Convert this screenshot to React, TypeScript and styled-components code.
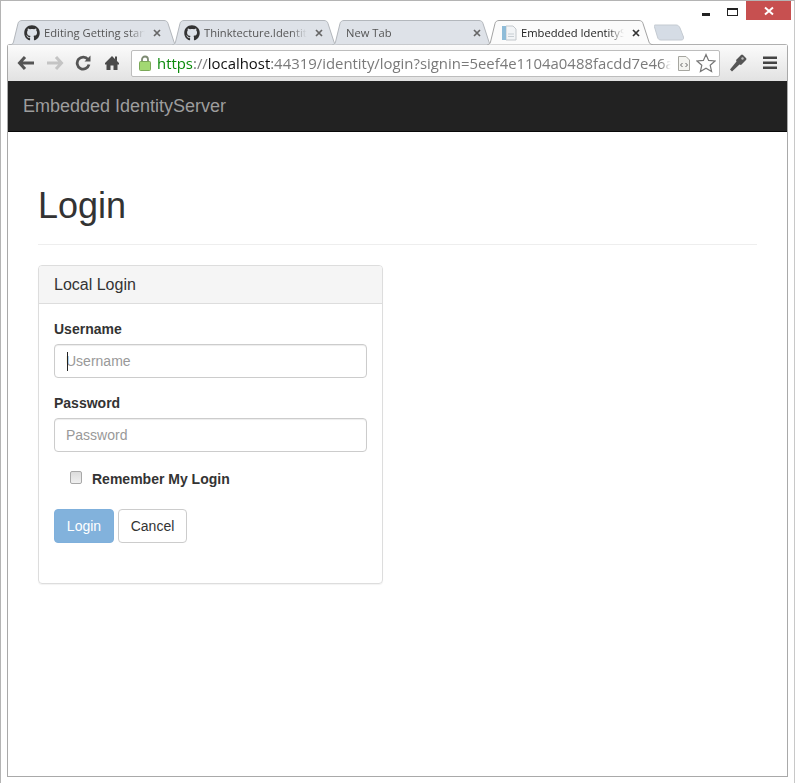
import React from "react"
import styled, { createGlobalStyle } from "styled-components"
import { FaGithub } from "react-icons/fa"

const GlobalStyle = createGlobalStyle`
   html, body {
      margin: 0;
      padding: 0;
      background: #fff;
   }
   * { box-sizing: border-box; }
`

const Win = styled.div`
   width: 795px;
   height: 783px;
   display: flex;
   flex-direction: column;
   background: #fff;
   border-top: 1px solid #b4b4b4;
   border-left: 1px solid #b4b4b4;
   border-right: 1px solid #c8c8c8;
   overflow: hidden;
`
const TitleBar = styled.div`
   height: 19px;
   flex: none;
   display: flex;
   justify-content: flex-end;
   align-items: flex-start;
   padding-right: 3px;
`
const MinBtn = styled.div`
   width: 8px;
   height: 3px;
   margin-top: 12px;
   background: #222;
`
const MaxBtn = styled.div`
   width: 11px;
   height: 8px;
   margin: 7px 0 0 17px;
   border: 1px solid #222;
   border-top-width: 2px;
`
const CloseBtn = styled.div`
   width: 45px;
   height: 19px;
   margin-left: 8px;
   background: #c75050;
   display: flex;
   align-items: center;
   justify-content: center;
`
const TabStrip = styled.div`
   height: 25px;
   flex: none;
   display: flex;
   padding-left: 9px;
   position: relative;
   z-index: 1;
   margin-bottom: -1px;
`
const TabBox = styled.div<{ $w: number; $active?: boolean; $pad: number; $padRight: number }>`
   position: relative;
   width: ${p => p.$w}px;
   height: 25px;
   margin-right: -6px;
   padding-left: ${p => p.$pad}px;
   padding-right: ${p => p.$padRight}px;
   display: flex;
   align-items: center;
   z-index: ${p => (p.$active ? 2 : 0)};
   font-family: "Open Sans", "Noto Sans", sans-serif;
   font-size: 11.2px;
   color: ${p => (p.$active ? "#222" : "#555")};
`
const TabOutline = styled.svg`
   position: absolute;
   left: 0;
   top: 0;
`
const TabIcon = styled.span`
   position: relative;
   width: 16px;
   height: 16px;
   flex: none;
   margin-right: 4px;
   color: #333;
   display: flex;
`
const TabTitle = styled.span`
   position: relative;
   flex: 1;
   min-width: 0;
   white-space: nowrap;
   overflow: hidden;
   mask-image: linear-gradient(to right, #000 84%, transparent 100%);
`
const TabClose = styled.svg`
   position: relative;
   flex: none;
   margin-left: 8px;
`
const NewTab = styled.svg`
   flex: none;
   margin: 4px 0 0 7px;
`
const Browser = styled.div`
   flex: none;
   height: 733px;
   margin: 0 6px;
   display: flex;
   flex-direction: column;
   border: 1px solid #a9a9a9;
   border-top-color: #b0b0b0;
   border-radius: 3px 3px 0 0;
`
const Toolbar = styled.div`
   height: 36px;
   flex: none;
   display: flex;
   align-items: center;
   background: linear-gradient(#fbfbfb, #e2e2e2);
   position: relative;
`
const NavIcon = styled.svg<{ $ml: number }>`
   flex: none;
   margin-left: ${p => p.$ml}px;
`
const Omnibox = styled.div`
   width: 589px;
   height: 27px;
   margin-left: 11px;
   flex: none;
   display: flex;
   align-items: center;
   background: #fff;
   border: 1px solid #bdbdbd;
   border-radius: 2px;
   padding-left: 7px;
`
const UrlText = styled.div`
   flex: none;
   width: 514px;
   margin-left: 6px;
   overflow: hidden;
   white-space: nowrap;
   font-family: "Open Sans", "Noto Sans", sans-serif;
   font-size: 14.9px;
   color: #7a7a7a;
   mask-image: linear-gradient(to right, #000 98%, transparent 100%);
`
const Https = styled.span`
   color: #0b8a0b;
`
const Host = styled.span`
   color: #111;
`
const Navbar = styled.div`
   height: 51px;
   flex: none;
   display: flex;
   align-items: center;
   padding-left: 15px;
   background: #222;
   border-bottom: 1px solid #080808;
   font-family: "Liberation Sans", Arial, sans-serif;
   font-size: 18px;
   color: #9d9d9d;
`
const Page = styled.div`
   flex: 1;
   padding: 0 30px;
   background: #fff;
   font-family: "Liberation Sans", Arial, sans-serif;
   font-size: 14px;
   color: #333;
`
const PageHeader = styled.div`
   margin-top: 40px;
   height: 73px;
   border-bottom: 1px solid #eee;
`
const Heading = styled.h1`
   margin: 0;
   padding-top: 14px;
   font-size: 36px;
   font-weight: 500;
   line-height: 40px;
`
const Panel = styled.div`
   width: 345px;
   height: 319px;
   margin-top: 20px;
   border: 1px solid #ddd;
   border-radius: 4px;
   box-shadow: 0 1px 1px rgba(0, 0, 0, 0.05);
`
const PanelHead = styled.div`
   height: 38px;
   padding: 0 15px;
   display: flex;
   align-items: center;
   background: #f5f5f5;
   border-bottom: 1px solid #ddd;
   border-radius: 3px 3px 0 0;
   font-size: 16px;
`
const PanelBody = styled.div`
   padding: 15px;
`
const FieldGroup = styled.div`
   margin-bottom: 15px;
`
const Label = styled.label`
   display: block;
   font-weight: 700;
   line-height: 20px;
   margin-bottom: 5px;
`
const Input = styled.div`
   position: relative;
   height: 34px;
   padding: 0 11px;
   display: flex;
   align-items: center;
   border: 1px solid #ccc;
   border-radius: 4px;
   box-shadow: inset 0 1px 1px rgba(0, 0, 0, 0.075);
   color: #999;
`
const Caret = styled.span`
   position: absolute;
   left: 12px;
   top: 7px;
   width: 1px;
   height: 19px;
   background: #222;
`
const CheckRow = styled.div`
   display: flex;
   align-items: center;
   height: 20px;
   margin-top: 17px;
   padding-left: 16px;
   font-weight: 700;
`
const CheckBox = styled.span`
   width: 12px;
   height: 13px;
   margin: -3px 10px 0 0;
   flex: none;
   border: 1px solid #a8a8a8;
   border-radius: 2px;
   background: linear-gradient(#dcdcdc, #f0f0f0);
`
const Buttons = styled.div`
   display: flex;
   gap: 4px;
   margin-top: 20px;
`
const Button = styled.div<{ $primary?: boolean; $w: number }>`
   width: ${p => p.$w}px;
   height: 34px;
   display: flex;
   align-items: center;
   justify-content: center;
   border: 1px solid ${p => (p.$primary ? "#7fb0dc" : "#ccc")};
   border-radius: 4px;
   background: ${p => (p.$primary ? "#82b2dc" : "#fff")};
   color: ${p => (p.$primary ? "#fff" : "#333")};
`

function tabPath(w: number) {
   return `M0.5 24.5 C2.5 24.5 3 23.5 3.5 22 L8 3.5 C8.5 1.5 10 0.5 12 0.5 L${w - 14} 0.5 C${w - 12} 0.5 ${w - 10.5} 1.5 ${w - 10} 3.5 L${w - 4} 22 C${w - 3.5} 23.5 ${w - 2.5} 24.5 ${w - 0.5} 24.5`
}

type TabProps = { w: number; pad: number; padRight: number; active?: boolean; icon?: React.ReactNode; title: string }

function Tab({ w, pad, padRight, active, icon, title }: TabProps) {
   return (
      <TabBox $w={w} $pad={pad} $padRight={padRight} $active={active}>
         <TabOutline width={w} height={25}>
            <path d={tabPath(w)} fill={active ? "#fbfbfb" : "#dee2e8"} stroke={active ? "#a3a3a3" : "#b3b7bc"} />
         </TabOutline>
         {icon && <TabIcon>{icon}</TabIcon>}
         <TabTitle>{title}</TabTitle>
         <TabClose width="8" height="8" viewBox="0 0 8 8">
            <path d="M1 1 L7 7 M7 1 L1 7" stroke={active ? "#333" : "#666"} strokeWidth="1.7" />
         </TabClose>
      </TabBox>
   )
}

function DocIcon() {
   return (
      <svg width="16" height="16" viewBox="0 0 16 16">
         <path d="M5 1 H12 L15 4 V15 H5 Z" fill="#f2f4f6" stroke="#c3c8cc" />
         <rect x="1" y="1" width="4" height="14" fill="#8fbcd8" />
         <path d="M7 9 H13 M7 11.5 H13" stroke="#c7ced3" />
      </svg>
   )
}

export default function App() {
   return (
      <>
         <GlobalStyle />
         <Win>
            <TitleBar>
               <MinBtn />
               <MaxBtn />
               <CloseBtn>
                  <svg width="10" height="10" viewBox="0 0 10 10">
                     <path d="M1 1.5 L9 8.5 M9 1.5 L1 8.5" stroke="#fff" strokeWidth="2" />
                  </svg>
               </CloseBtn>
            </TitleBar>
            <TabStrip>
               <Tab w={168} pad={14} padRight={17} icon={<FaGithub size={16} />} title="Editing Getting started" />
               <Tab w={166} pad={12} padRight={15} icon={<FaGithub size={16} />} title="Thinktecture.IdentityServer" />
               <Tab w={161} pad={14} padRight={12} title="New Tab" />
               <Tab w={166} pad={14} padRight={13} active icon={<DocIcon />} title="Embedded IdentityServer" />
               <NewTab width="30" height="17" viewBox="0 0 30 17">
                  <path d="M1 1 H22 C24 1 25 2 26 4 L29.5 13 C30 15 29 16 27 16 H7 C5 16 4 15 3.5 13 L0.5 3 C0 2 0 1 1 1 Z" fill="#d5dce5" stroke="#c4cad1" />
               </NewTab>
            </TabStrip>
            <Browser>
               <Toolbar>
                  <NavIcon $ml={9} width="18" height="16" viewBox="0 0 18 16">
                     <path d="M8 2 L2.5 8 L8 14 M3 8 H17" fill="none" stroke="#555" strokeWidth="3" />
                  </NavIcon>
                  <NavIcon $ml={11} width="18" height="16" viewBox="0 0 18 16">
                     <path d="M10 2 L15.5 8 L10 14 M15 8 H1" fill="none" stroke="#c4c4c4" strokeWidth="3" />
                  </NavIcon>
                  <NavIcon $ml={11} width="16" height="16" viewBox="0 0 16 16">
                     <path d="M13 4.5 A6 6 0 1 0 14 9.5" fill="none" stroke="#555" strokeWidth="2.8" />
                     <path d="M9.5 6.5 H15.5 V0.5 Z" fill="#555" />
                  </NavIcon>
                  <NavIcon $ml={13} width="16" height="16" viewBox="0 0 16 16">
                     <path d="M8 1 L15 8 V9.5 H13.5 V15 H9.5 V10.5 H6.5 V15 H2.5 V9.5 H1 V8 Z M11 1.5 H13 V6 L11 4 Z" fill="#4a4a4a" />
                  </NavIcon>
                  <Omnibox>
                     <svg width="12" height="16" viewBox="0 0 12 16" style={{ flex: "none" }}>
                        <path d="M3 7 V4.5 A3 3 0 0 1 9 4.5 V7" fill="none" stroke="#7d8a72" strokeWidth="1.8" />
                        <rect x="0.5" y="6.5" width="11" height="9" rx="1" fill="#a2d873" stroke="#7aa858" />
                     </svg>
                     <UrlText>
                        <Https>https</Https>://<Host>localhost</Host>:44319/identity/login?signin=5eef4e1104a0488facdd7e46a1
                     </UrlText>
                     <svg width="14" height="17" viewBox="0 0 14 17" style={{ flex: "none", marginLeft: 6 }}>
                        <path d="M1.5 1.5 H9 L12.5 5 V15.5 H1.5 Z" fill="#f4f4f0" stroke="#a6a6a0" />
                        <path d="M5.5 8 L3.5 10 L5.5 12 M8.5 8 L10.5 10 L8.5 12" fill="none" stroke="#666" />
                     </svg>
                     <svg width="20" height="20" viewBox="0 0 20 20" style={{ flex: "none", marginLeft: 5 }}>
                        <path d="M10 1.5 L12.6 7.4 L19 8 L14.2 12.2 L15.6 18.5 L10 15.2 L4.4 18.5 L5.8 12.2 L1 8 L7.4 7.4 Z" fill="#fff" stroke="#777" strokeWidth="1.2" />
                     </svg>
                  </Omnibox>
                  <NavIcon $ml={9} width="18" height="20" viewBox="0 0 18 20">
                     <path d="M3 18.5 L1 16.5 L7.5 8.5 L7 7 L12 2 Q13 1 14 2 L17 5 Q18 6 17 7 L12 12 L10.5 11.5 Z" fill="#555" />
                     <circle cx="13.5" cy="5.5" r="1.2" fill="#bbb" />
                  </NavIcon>
                  <NavIcon $ml={16} width="14" height="14" viewBox="0 0 14 14">
                     <path d="M0 0.5 H14 V3 H0 Z M0 5.5 H14 V8 H0 Z M0 10.5 H14 V13 H0 Z" fill="#444" />
                  </NavIcon>
               </Toolbar>
               <Navbar>Embedded IdentityServer</Navbar>
               <Page>
                  <PageHeader>
                     <Heading>Login</Heading>
                  </PageHeader>
                  <Panel>
                     <PanelHead>Local Login</PanelHead>
                     <PanelBody>
                        <FieldGroup>
                           <Label>Username</Label>
                           <Input>
                              <Caret />
                              Username
                           </Input>
                        </FieldGroup>
                        <FieldGroup>
                           <Label>Password</Label>
                           <Input>Password</Input>
                        </FieldGroup>
                        <CheckRow>
                           <CheckBox />
                           Remember My Login
                        </CheckRow>
                        <Buttons>
                           <Button $primary $w={60}>Login</Button>
                           <Button $w={69}>Cancel</Button>
                        </Buttons>
                     </PanelBody>
                  </Panel>
               </Page>
            </Browser>
         </Win>
      </>
   )
}
